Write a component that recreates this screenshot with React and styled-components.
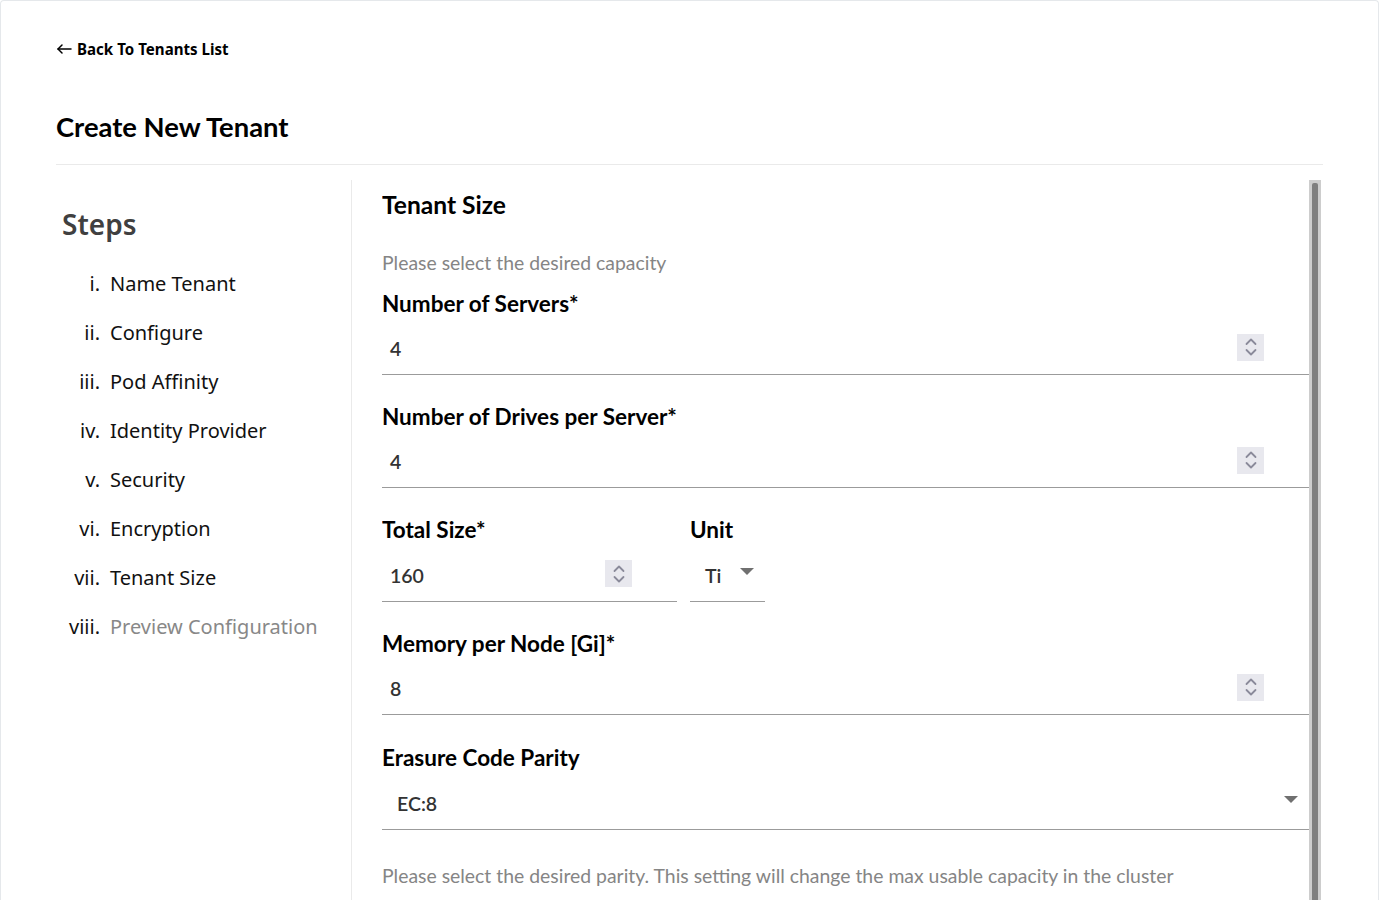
import React from "react";
import styled, { createGlobalStyle } from "styled-components";

const Global = createGlobalStyle`
  html, body { margin: 0; padding: 0; overflow: hidden; background: #fff; }
  body { font-family: Lato, "Noto Sans", sans-serif; color: #000; }
  * { box-sizing: border-box; }
`;

const Page = styled.div`
  width: 1379px;
  height: 900px;
  border: 1px solid #e5e8eb;
  border-bottom: none;
  border-radius: 4px 4px 0 0;
  padding: 0 55px 0 55px;
  display: flex;
  flex-direction: column;
  overflow: hidden;
`;

const BackLink = styled.a`
  display: flex;
  align-items: center;
  gap: 5px;
  margin-top: 38px;
  height: 20px;
  font-family: "Noto Sans", sans-serif;
  font-weight: 700;
  font-size: 15.1px;
  color: #000;
  text-decoration: none;
  cursor: pointer;
`;

const Title = styled.h1`
  margin: 50px 0 0;
  font-family: Lato, sans-serif;
  font-weight: 700;
  font-size: 27.4px;
  line-height: 36px;
  color: #000;
  padding-bottom: 19px;
  border-bottom: 1px solid #eaeaea;
`;

const Body = styled.div`
  display: flex;
  flex: 1;
  min-height: 0;
  margin-top: 15px;
`;

const Sidebar = styled.nav`
  width: 296px;
  flex-shrink: 0;
  border-right: 1px solid #eaeaea;
  padding: 24px 0 0 6px;
`;

const StepsTitle = styled.h2`
  margin: 0 0 15px;
  font-family: "Noto Sans", sans-serif;
  font-weight: 600;
  font-size: 28px;
  line-height: 40px;
  color: #404040;
`;

const StepList = styled.ol`
  list-style: none;
  margin: 0;
  padding: 0;
  display: flex;
  flex-direction: column;
`;

const StepItem = styled.li`
  display: grid;
  grid-template-columns: 38px 1fr;
  column-gap: 10px;
  align-items: center;
  height: 49px;
  font-family: "Noto Sans", sans-serif;
  font-size: 20px;
  color: ${(p) => (p.$pending ? "#888" : "#111")};
`;

const StepNum = styled.span`
  text-align: right;
  color: #111;
`;

const Panel = styled.div`
  flex: 1;
  display: flex;
  margin-left: 30px;
  margin-right: 2px;
  overflow: hidden;
`;

const Content = styled.div`
  flex: 1;
  padding-top: 8px;
`;

const ScrollTrack = styled.div`
  width: 12px;
  flex-shrink: 0;
  background: #cdcdcd;
  padding: 3px 3px 0;
  display: flex;
`;

const ScrollThumb = styled.div`
  flex: 1;
  background: #7f7f7f;
  border-radius: 2px 2px 0 0;
`;

const SectionTitle = styled.h3`
  margin: 0;
  font-family: Lato, sans-serif;
  font-weight: 700;
  font-size: 24.6px;
  line-height: 34px;
  color: #000;
`;

const Hint = styled.p`
  margin: ${(p) => p.$m || "0"};
  font-family: Lato, sans-serif;
  font-size: 19.4px;
  line-height: 26px;
  color: #858585;
`;

const Field = styled.div`
  display: flex;
  flex-direction: column;
  width: ${(p) => p.$w || "auto"};
`;

const Label = styled.label`
  font-family: Lato, sans-serif;
  font-weight: 700;
  font-size: 22.5px;
  line-height: 28px;
  color: #000;
  height: 28px;
`;

const InputRow = styled.div`
  display: flex;
  align-items: center;
  height: ${(p) => p.$h || "54px"};
  margin-top: 3px;
  border-bottom: 1px solid #9b9b9b;
  padding: 0 ${(p) => p.$pr || "45px"} 0 ${(p) => p.$pl || "8px"};
`;

const Value = styled.span`
  flex: 1;
  font-family: Lato, sans-serif;
  font-weight: 600;
  font-size: 19.5px;
  color: #333;
  padding-top: 2px;
`;

const Spinner = styled.span`
  width: 27px;
  height: 27px;
  background: #e8e8ee;
  display: flex;
  align-items: center;
  justify-content: center;
  margin-top: -1px;
`;

const Caret = styled.span`
  width: 0;
  height: 0;
  border-left: 7px solid transparent;
  border-right: 7px solid transparent;
  border-top: 7px solid #707070;
  margin-top: -6px;
`;

const Group = styled.div`
  margin-top: ${(p) => p.$mt || "28px"};
`;

const Row = styled.div`
  display: flex;
  gap: 13px;
  margin-top: 28px;
`;

function SpinIcon() {
  return (
    <Spinner>
      <svg width="14" height="20" viewBox="0 0 14 20" fill="none" stroke="#8a8a9a" strokeWidth="1.8" strokeLinecap="round" strokeLinejoin="round">
        <path d="M2.5 7 L7 2.5 L11.5 7" />
        <path d="M2.5 13 L7 17.5 L11.5 13" />
      </svg>
    </Spinner>
  );
}

function NumberField({ label, value, w, h }) {
  return (
    <Field $w={w}>
      <Label>{label}</Label>
      <InputRow $h={h}>
        <Value>{value}</Value>
        <SpinIcon />
      </InputRow>
    </Field>
  );
}

const steps = [
  ["i.", "Name Tenant"],
  ["ii.", "Configure"],
  ["iii.", "Pod Affinity"],
  ["iv.", "Identity Provider"],
  ["v.", "Security"],
  ["vi.", "Encryption"],
  ["vii.", "Tenant Size"],
  ["viii.", "Preview Configuration", true],
];

export default function App() {
  return (
    <>
      <Global />
      <Page>
        <BackLink>
          <svg width="16" height="12" viewBox="0 0 16 12" fill="none" stroke="#000" strokeWidth="1.5" strokeLinecap="round" strokeLinejoin="round">
            <path d="M15 6 H2" />
            <path d="M6 2 L2 6 L6 10" />
          </svg>
          Back To Tenants List
        </BackLink>
        <Title>Create New Tenant</Title>
        <Body>
          <Sidebar>
            <StepsTitle>Steps</StepsTitle>
            <StepList>
              {steps.map(([n, t, pending]) => (
                <StepItem key={n} $pending={pending}>
                  <StepNum>{n}</StepNum>
                  <span>{t}</span>
                </StepItem>
              ))}
            </StepList>
          </Sidebar>
          <Panel>
            <Content>
              <SectionTitle>Tenant Size</SectionTitle>
              <Hint $m="28px 0 0">Please select the desired capacity</Hint>
              <Group $mt="14px">
                <NumberField label="Number of Servers*" value="4" />
              </Group>
              <Group>
                <NumberField label="Number of Drives per Server*" value="4" />
              </Group>
              <Row>
                <NumberField label="Total Size*" value="160" w="295px" h="55px" />
                <Field $w="75px">
                  <Label>Unit</Label>
                  <InputRow $pl="15px" $pr="11px" $h="55px">
                    <Value>Ti</Value>
                    <Caret />
                  </InputRow>
                </Field>
              </Row>
              <Group>
                <NumberField label="Memory per Node [Gi]*" value="8" />
              </Group>
              <Group $mt="29px">
                <Field>
                  <Label>Erasure Code Parity</Label>
                  <InputRow $pl="15px" $pr="11px" $h="55px">
                    <Value>EC:8</Value>
                    <Caret />
                  </InputRow>
                </Field>
              </Group>
              <Hint $m="33px 0 0">
                Please select the desired parity. This setting will change the max usable capacity in the cluster
              </Hint>
            </Content>
            <ScrollTrack>
              <ScrollThumb />
            </ScrollTrack>
          </Panel>
        </Body>
      </Page>
    </>
  );
}
